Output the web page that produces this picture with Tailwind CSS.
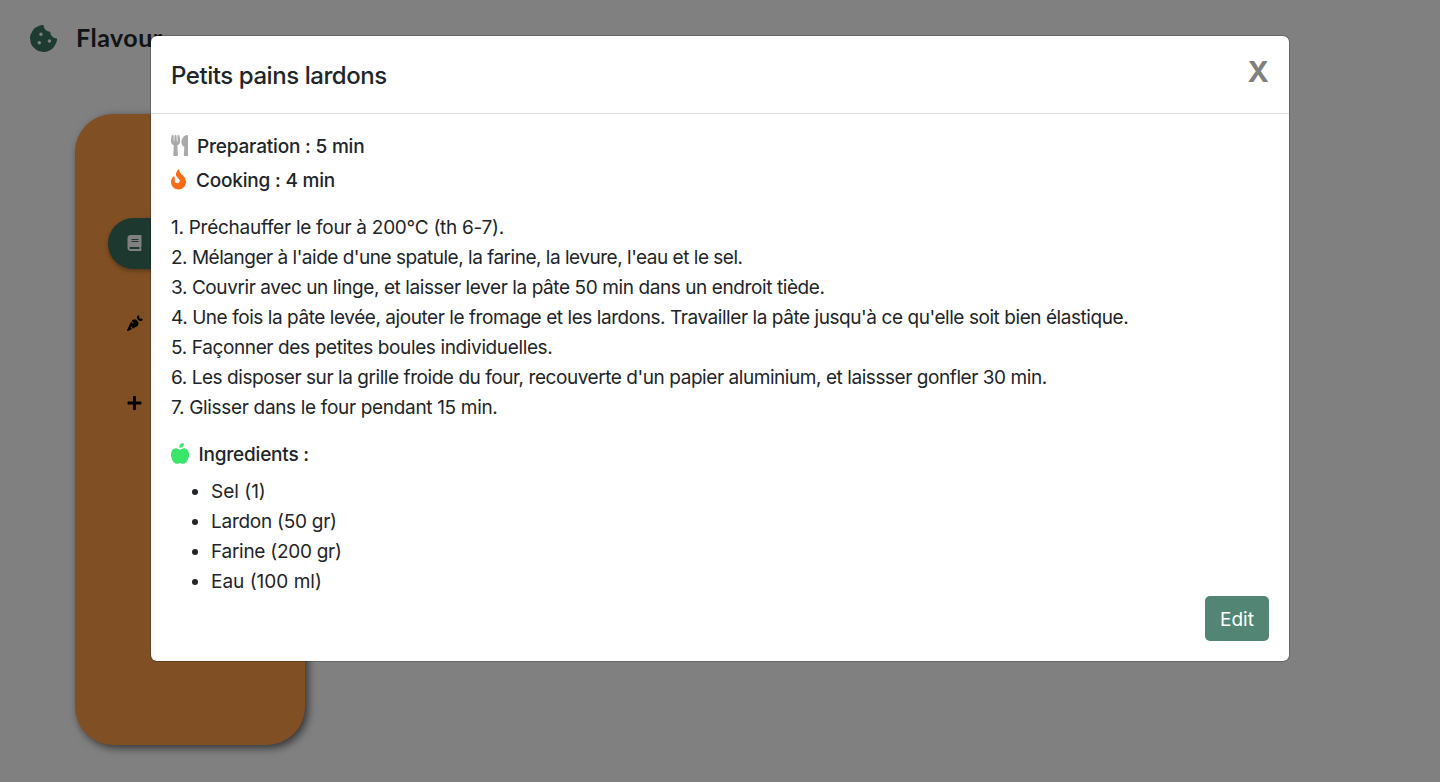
<!DOCTYPE html>
<html lang="en">
<head>
<meta charset="utf-8">
<title>Flavour</title>
<script src="https://cdn.jsdelivr.net/npm/@tailwindcss/browser@4"></script>
</head>
<body class="h-screen overflow-hidden bg-[#808080] font-['Inter',sans-serif] text-[#212529]">
<div class="h-screen">
  <header class="flex h-[77px] items-center gap-[19px] pl-[30px]">
    <svg class="size-[27px] fill-[#1d3b30]" viewBox="0 0 512 512"><path d="M510.52 255.82c-69.97-.85-126.47-57.69-126.47-127.86-70.17 0-127-56.49-127.86-126.45-27.26-4.14-55.13.3-79.72 12.82l-69.13 35.22a132.221 132.221 0 0 0-57.79 57.81l-35.1 68.88a132.645 132.645 0 0 0-12.82 80.95l12.08 76.27a132.521 132.521 0 0 0 37.16 72.96l54.77 54.76a132.036 132.036 0 0 0 72.71 37.06l76.71 12.15c27.51 4.36 55.7-.11 80.53-12.76l69.13-35.21a132.273 132.273 0 0 0 57.79-57.81l35.1-68.88c12.56-24.64 17.01-52.58 12.91-79.91zM176 368c-17.67 0-32-14.33-32-32s14.33-32 32-32 32 14.33 32 32-14.33 32-32 32zm32-160c-17.67 0-32-14.33-32-32s14.33-32 32-32 32 14.33 32 32-14.33 32-32 32zm160 128c-17.67 0-32-14.33-32-32s14.33-32 32-32 32 14.33 32 32-14.33 32-32 32z"/></svg>
    <span class="-mt-px font-['Lato',sans-serif] text-[25px] font-bold tracking-[0.5px] text-[#111315]">Flavour</span>
  </header>
  <nav class="mt-[37px] ml-[75px] flex h-[631px] w-[230px] flex-col rounded-[38px] bg-[#804f24] pt-[104px] pl-[33px] shadow-[3px_3px_8px_rgba(0,0,0,0.6)]">
    <a class="flex h-[51px] w-[165px] items-center rounded-full bg-[#1d392f] pb-0.5 pl-[19px] shadow-[0_2px_4px_rgba(0,0,0,0.3)]"><svg class="h-4 w-[15px] fill-[#808080]" viewBox="0 0 448 512"><path d="M448 360V24c0-13.3-10.7-24-24-24H96C43 0 0 43 0 96v320c0 53 43 96 96 96h328c13.3 0 24-10.7 24-24v-16c0-7.5-3.5-14.3-8.9-18.7-4.2-15.4-4.2-59.3 0-74.7 5.4-4.3 8.9-11.1 8.9-18.6zM128 134c0-3.3 2.7-6 6-6h212c3.3 0 6 2.7 6 6v20c0 3.3-2.7 6-6 6H134c-3.3 0-6-2.7-6-6v-20zm0 64c0-3.3 2.7-6 6-6h212c3.3 0 6 2.7 6 6v20c0 3.3-2.7 6-6 6H134c-3.3 0-6-2.7-6-6v-20zm253.4 250H96c-17.7 0-32-14.3-32-32 0-17.6 14.4-32 32-32h285.4c-1.9 17.1-1.9 46.9 0 64z"/></svg></a>
    <a class="mt-[29px] flex h-[51px] items-center pb-0.5 pl-[19px]"><svg class="size-4" viewBox="0 0 512 512"><path d="M298.2 156.6c-52.7-25.7-114.5-10.5-150.2 32.8l55.2 55.2c6.3 6.3 6.3 16.4 0 22.6-3.1 3.1-7.2 4.7-11.3 4.7s-8.2-1.6-11.3-4.7L130.4 217 2.3 479.7c-2.9 6-3.1 13.3 0 19.7 5.4 11.1 18.9 15.7 30 10.3l133.6-65.2-49.2-49.2c-6.3-6.2-6.3-16.4 0-22.6 6.3-6.2 16.4-6.2 22.6 0l57 57 102-49.8c24-11.7 44.5-31.3 57.1-57.1 30.1-61.7 4.5-136.1-57.2-166.2zm92.1-34.9C409.8 81 399.7 32.9 360 0c-50.3 41.7-52.5 107.5-7.9 151.9l8 8c44.4 44.6 110.3 42.4 151.9-7.9-32.9-39.7-81-49.8-121.7-30.3z"/></svg></a>
    <a class="mt-[29px] flex h-[51px] items-center pb-0.5 pl-[19px]"><svg class="h-4 w-[15px]" viewBox="0 0 448 512"><path d="M416 208H272V64c0-17.67-14.33-32-32-32h-32c-17.67 0-32 14.33-32 32v144H32c-17.67 0-32 14.33-32 32v32c0 17.67 14.33 32 32 32h144v144c0 17.67 14.33 32 32 32h32c17.67 0 32-14.33 32-32V304h144c17.67 0 32-14.33 32-32v-32c0-17.67-14.33-32-32-32z"/></svg></a>
  </nav>
</div>
<div class="absolute inset-x-0 top-9 flex justify-center">
  <section class="h-[625px] w-[1138px] rounded-[6px] bg-white shadow-[0_0_0_1px_rgba(0,0,0,0.2)]">
    <div class="flex h-[78px] items-start justify-between border-b border-[#dee2e6] px-5">
      <h5 class="mt-[21px] text-[24px] leading-[38px] font-medium tracking-[-0.44px]">Petits pains lardons</h5>
      <button class="mt-[21px] text-[29px] leading-[30px] font-bold text-[#808080]">X</button>
    </div>
    <div class="flex h-[547px] flex-col px-5 pt-[17px] text-[19px] leading-[30px]">
      <p class="flex h-[30px] items-start gap-[9px] font-medium"><svg class="mt-1 h-[21px] w-[17px] fill-[#a9a9a9]" viewBox="0 0 416 512"><path d="M207.9 15.2c.8 4.7 16.1 94.5 16.1 128.8 0 52.3-27.8 89.6-68.9 104.6L168 486.7c.7 13.7-10.2 25.3-24 25.3H80c-13.7 0-24.7-11.5-24-25.3l12.9-238.1C27.7 233.6 0 196.2 0 144 0 109.6 15.3 19.9 16.1 15.2 19.3-5.1 61.4-5.4 64 16.3v141.2c1.3 3.4 15.1 3.2 16 0 1.4-25.3 7.9-139.2 8-141.8 3.3-20.8 44.7-20.8 47.9 0 .2 2.7 6.6 116.5 8 141.8.9 3.2 14.8 3.4 16 0V16.3c2.6-21.6 44.8-21.4 48-1.1zm119.2 285.7l-15 185.1c-1.2 14 9.9 26 23.9 26h56c13.3 0 24-10.7 24-24V24c0-13.2-10.7-24-24-24-82.5 0-221.4 178.5-64.9 300.9z"/></svg><span class="mt-px tracking-[-0.19px]">Preparation : 5 min</span></p>
      <p class="mt-1 flex h-[30px] items-start gap-2.5 font-medium"><svg class="mt-1 h-[21px] w-[15px] fill-[#fd6d16]" viewBox="0 0 384 512"><path d="M216 23.86c0-23.8-30.65-32.77-44.15-13.04C48 191.85 224 200 224 288c0 35.63-29.11 64.46-64.85 63.99-35.17-.45-63.15-29.77-63.15-64.94v-85.51c0-21.7-26.47-32.23-41.43-16.5C27.8 213.16 0 261.33 0 320c0 105.87 86.13 192 192 192s192-86.13 192-192c0-170.29-168-193-168-296.14z"/></svg><span class="mt-px tracking-[-0.2px]">Cooking : 4 min</span></p>
      <div class="mt-[18px] flex flex-col items-start whitespace-nowrap">
        <p class="tracking-[-0.27px]">1. Préchauffer le four à 200°C (th 6-7).</p>
        <p class="tracking-[-0.49px]">2. Mélanger à l'aide d'une spatule, la farine, la levure, l'eau et le sel.</p>
        <p class="tracking-[-0.41px]">3. Couvrir avec un linge, et laisser lever la pâte 50 min dans un endroit tiède.</p>
        <p class="tracking-[-0.44px]">4. Une fois la pâte levée, ajouter le fromage et les lardons. Travailler la pâte jusqu'à ce qu'elle soit bien élastique.</p>
        <p class="tracking-[-0.37px]">5. Façonner des petites boules individuelles.</p>
        <p class="tracking-[-0.44px]">6. Les disposer sur la grille froide du four, recouverte d'un papier aluminium, et laissser gonfler 30 min.</p>
        <p class="tracking-[-0.33px]">7. Glisser dans le four pendant 15 min.</p>
      </div>
      <p class="mt-4 flex h-[30px] items-start gap-[9.5px] font-medium"><svg class="mt-1 h-[21px] w-[18px] fill-[#39e669]" viewBox="0 0 448 512"><path d="M350.85 129c25.97 4.67 47.27 18.67 63.92 42 14.65 20.67 24.64 46.67 29.96 78 4.67 28.67 4.32 57.33-1 86-7.99 47.33-23.97 87-47.94 119-28.64 38.67-64.59 58-107.87 58-10.66 0-22.3-3.33-34.96-10-8.66-5.33-18.31-8-28.97-8s-20.3 2.67-28.97 8c-12.66 6.67-24.3 10-34.96 10-43.28 0-79.23-19.33-107.87-58-23.97-32-39.95-71.67-47.94-119-5.32-28.67-5.67-57.33-1-86 5.32-31.33 15.31-57.33 29.96-78 16.65-23.33 37.95-37.33 63.92-42 15.98-2.67 37.95-.33 65.92 7 23.97 6.67 44.28 14.67 60.93 24 16.65-9.33 36.96-17.33 60.93-24 27.98-7.33 49.96-9.67 65.94-7zm-54.94-41c-9.32 8.67-21.65 15-36.96 19-10.66 3.33-22.3 5-34.96 5l-14.98-1c-1.33-9.33-1.33-20 0-32 2.67-24 10.32-42.33 22.97-55 9.32-8.67 21.65-15 36.96-19 10.66-3.33 22.3-5 34.96-5l14.98 1 1 15c0 12.67-1.67 24.33-4.99 35-3.99 15.33-10.31 27.67-18.98 37z"/></svg><span class="mt-px tracking-[-0.2px]">Ingredients :</span></p>
      <ul class="mt-2 -mb-px flex list-disc flex-col items-start pl-10">
        <li>Sel (1)</li>
        <li class="tracking-[-0.26px]">Lardon (50 gr)</li>
        <li class="tracking-[-0.27px]">Farine (200 gr)</li>
        <li>Eau (100 ml)</li>
      </ul>
      <button class="h-[45px] w-16 shrink-0 self-end rounded-[5px] bg-[#528574] pt-0.5 text-white">Edit</button>
    </div>
  </section>
</div>
</body>
</html>
